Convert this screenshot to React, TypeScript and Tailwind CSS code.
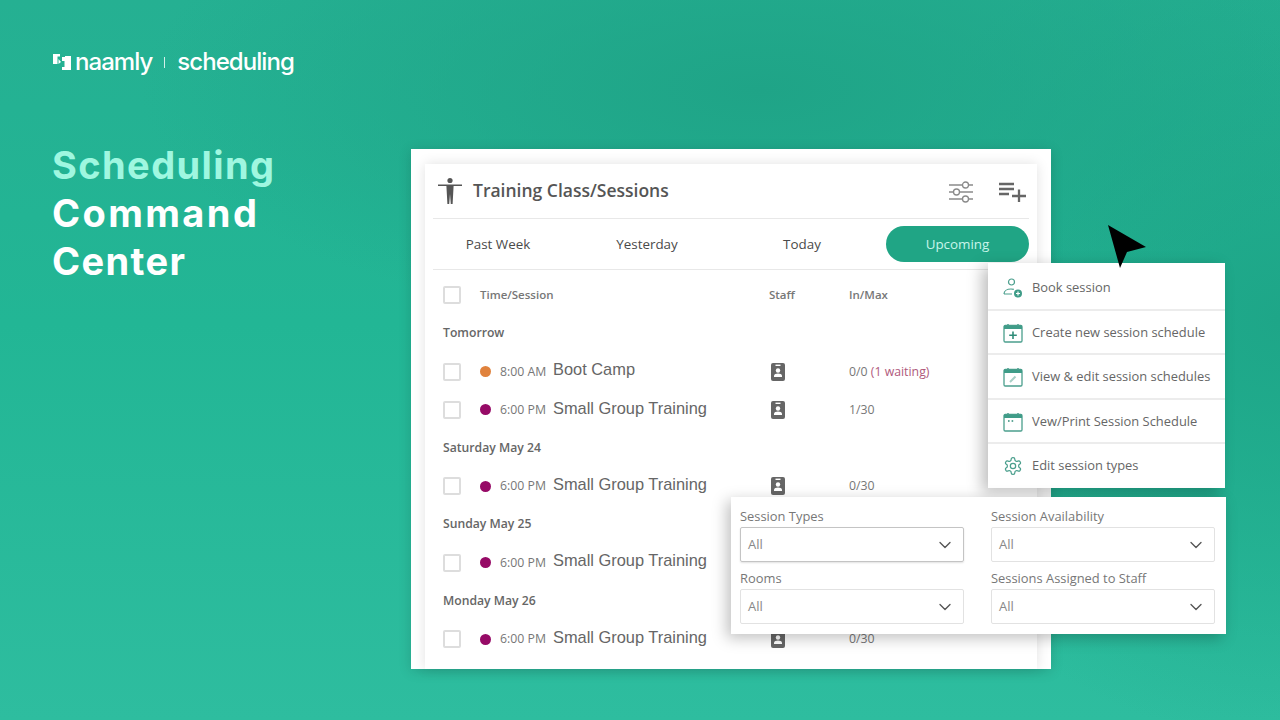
import React from 'react';
import { ChevronDown } from 'lucide-react';

interface Session {
  time: string;
  name: string;
  dot: string;
  count: string;
  waiting?: string;
}

interface SessionGroup {
  label: string;
  sessions: Session[];
}

const groups: SessionGroup[] = [
  {
    label: 'Tomorrow',
    sessions: [
      { time: '8:00 AM', name: 'Boot Camp', dot: 'bg-[#e0823d]', count: '0/0', waiting: '(1 waiting)' },
      { time: '6:00 PM', name: 'Small Group Training', dot: 'bg-[#960a66]', count: '1/30' },
    ],
  },
  {
    label: 'Saturday May 24',
    sessions: [{ time: '6:00 PM', name: 'Small Group Training', dot: 'bg-[#960a66]', count: '0/30' }],
  },
  {
    label: 'Sunday May 25',
    sessions: [{ time: '6:00 PM', name: 'Small Group Training', dot: 'bg-[#960a66]', count: '0/30' }],
  },
  {
    label: 'Monday May 26',
    sessions: [{ time: '6:00 PM', name: 'Small Group Training', dot: 'bg-[#960a66]', count: '0/30' }],
  },
];

const filters = ['Session Types', 'Session Availability', 'Rooms', 'Sessions Assigned to Staff'];

function Checkbox() {
  return <span className="block w-[18px] h-[18px] rounded-[2px] border-2 border-[#dddddd] bg-white" />;
}

function LogoMark() {
  return (
    <svg width="20" height="18" viewBox="0 0 20 18" fill="#ffffff">
      <path d="M1 1h7v2.500H5.500V11H1z" />
      <path d="M6.500 6l2.500 3-2.500 2z" />
      <path d="M10 4h3V3h6v14h-9v-3h2.500V8H10z" />
    </svg>
  );
}

function PersonIcon() {
  return (
    <svg width="24" height="28" viewBox="0 0 24 28" fill="#555555">
      <circle cx="12" cy="3.500" r="2.600" />
      <path d="M0 7.500h24v1.600h-8.400L14.600 27h-1.800L12 17l-.8 10H9.400L8.400 9.100H0z" />
    </svg>
  );
}

function SlidersIcon() {
  return (
    <svg width="24" height="22" viewBox="0 0 24 22" fill="none" stroke="#8a8a8a" strokeWidth="1.300">
      <path d="M0 4h13M20 4h4M0 11h4M11 11h13M0 18h13M20 18h4" />
      <circle cx="16.500" cy="4" r="3" fill="#ffffff" />
      <circle cx="7.500" cy="11" r="3" fill="#ffffff" />
      <circle cx="16.500" cy="18" r="3" fill="#ffffff" />
    </svg>
  );
}

function ListPlusIcon() {
  return (
    <svg width="28" height="20" viewBox="0 0 28 20" fill="none" stroke="#666666" strokeWidth="2.300">
      <path d="M0 2h15M0 7h15M0 12h10M13 14h14M20 7.500v12.500" />
    </svg>
  );
}

function StaffIcon() {
  return (
    <svg width="14" height="18" viewBox="0 0 14 18">
      <rect width="14" height="18" rx="2" fill="#666666" />
      <rect x="4.500" y="1.600" width="5" height="1.400" fill="#ffffff" />
      <circle cx="7" cy="7.500" r="2.200" fill="#ffffff" />
      <path d="M3 14v-1.200C3 11.300 5 10.600 7 10.600s4 .7 4 2.200V14z" fill="#ffffff" />
    </svg>
  );
}

function CalendarIcon({ kind }: { kind: 'plus' | 'edit' | 'dots' }) {
  return (
    <svg width="20" height="20" viewBox="0 0 20 20" fill="none" stroke="#4b9f8d" strokeWidth="1.300">
      <rect x="1" y="2.500" width="18" height="16.500" rx="1.200" />
      <path d="M1 2.600h18v3.400H1z" fill="#3f9c88" stroke="none" />
      <path d="M5 1v2M15 1v2" strokeWidth="1.500" />
      {kind === 'plus' && <path d="M10 8.500v7.500M6.200 12.200h7.600" strokeWidth="1.600" stroke="#2f8c78" />}
      {kind === 'edit' && <path d="M7 15l5.500-5.500" strokeWidth="2" stroke="#a8cfc6" />}
      {kind === 'dots' && <path d="M5 9h1.600M8.600 9h1.600" strokeWidth="1.600" stroke="#2f8c78" />}
    </svg>
  );
}

function BookIcon() {
  return (
    <svg width="20" height="20" viewBox="0 0 20 20" fill="none" stroke="#4b9f8d" strokeWidth="1.200">
      <circle cx="8.500" cy="4" r="3" />
      <path d="M1 16c0-3 3-5 7-5 1 0 2 .1 2.800 .4M1 16h8" />
      <circle cx="15" cy="15.500" r="4" fill="#3f9c88" stroke="none" />
      <path d="M15 13.500v4M13 15.500h4" stroke="#ffffff" strokeWidth="1.200" />
    </svg>
  );
}

function GearIcon() {
  return (
    <svg width="20" height="20" viewBox="0 0 24 24" fill="none" stroke="#4b9f8d" strokeWidth="1.500">
      <path d="M12.200 2h-.4a2 2 0 0 0-2 2v.2a2 2 0 0 1-1 1.700l-.4.3a2 2 0 0 1-2 0l-.2-.1a2 2 0 0 0-2.700.7l-.2.4a2 2 0 0 0 .7 2.700l.2.100a2 2 0 0 1 1 1.700v.6a2 2 0 0 1-1 1.700l-.2.100a2 2 0 0 0-.7 2.700l.2.4a2 2 0 0 0 2.700.7l.2-.1a2 2 0 0 1 2 0l.4.3a2 2 0 0 1 1 1.700v.2a2 2 0 0 0 2 2h.4a2 2 0 0 0 2-2v-.2a2 2 0 0 1 1-1.700l.4-.3a2 2 0 0 1 2 0l.2.100a2 2 0 0 0 2.700-.7l.2-.4a2 2 0 0 0-.7-2.700l-.2-.1a2 2 0 0 1-1-1.700v-.6a2 2 0 0 1 1-1.700l.2-.1a2 2 0 0 0 .7-2.700l-.2-.4a2 2 0 0 0-2.700-.7l-.2.100a2 2 0 0 1-2 0l-.4-.3a2 2 0 0 1-1-1.700V4a2 2 0 0 0-2-2z" />
      <circle cx="12" cy="12" r="3.200" />
    </svg>
  );
}

const menuItems = [
  { label: 'Book session', icon: <BookIcon />, rowClass: 'h-[48px] pt-[3px] border-b-2 border-[#ececec]' },
  { label: 'Create new session schedule', icon: <CalendarIcon kind="plus" />, rowClass: 'h-[44px] pt-[1px] border-b-2 border-[#ececec]' },
  { label: 'View & edit session schedules', icon: <CalendarIcon kind="edit" />, rowClass: 'h-[45px] pt-[1px] border-b-2 border-[#ececec]' },
  { label: 'Vew/Print Session Schedule', icon: <CalendarIcon kind="dots" />, rowClass: 'h-[44px] pt-[1px] border-b-2 border-[#ececec]' },
  { label: 'Edit session types', icon: <GearIcon />, rowClass: 'h-[44px]' },
];

export default function App() {
  return (
    <div className="relative w-[1280px] h-[720px] overflow-hidden flex font-['Open_Sans',sans-serif] bg-[radial-gradient(ellipse_620px_240px_at_760px_90px,#1fa487_0%,rgba(31,164,135,0)_100%),radial-gradient(ellipse_420px_420px_at_1280px_320px,#1ea688_0%,rgba(30,166,136,0)_100%),linear-gradient(180deg,#25b092_0%,#22b695_45%,#2ebd9f_100%)]">
      {/* left side */}
      <div className="w-[411px] shrink-0 pl-[52px] pt-[44px]">
        <div className="flex items-center h-[36px] text-white font-['Inter',sans-serif] font-medium text-[24px] tracking-[-0.95px]">
          <LogoMark />
          <span className="ml-[3px]">naamly</span>
          <span className="ml-[12px] w-px h-[11px] bg-white/80" />
          <span className="ml-[12px]">scheduling</span>
        </div>
        <h1 className="mt-[61px] font-['Inter',sans-serif] font-bold text-[38px] leading-[48px] tracking-[1.4px] text-white">
          <span className="block text-[#9ff7e0]">Scheduling</span>
          <span className="block tracking-[2.4px]">Command</span>
          <span className="block">Center</span>
        </h1>
      </div>

      {/* main panel */}
      <div className="mt-[149px] w-[640px] h-[520px] bg-white px-[14px] pt-[15px] shadow-[0_2px_12px_rgba(0,0,0,0.15)]">
        <div className="h-full bg-white px-[8px] text-[#555555] shadow-[0_0_12px_rgba(0,0,0,0.12)]">
          <div className="h-[55px] flex items-center justify-between border-b border-[#e8e8e8]">
            <div className="flex items-center">
              <span className="ml-[5px] mr-[11px] flex"><PersonIcon /></span>
              <span className="text-[17.5px] font-semibold text-[#555555] -mt-[1px]">Training Class/Sessions</span>
            </div>
            <div className="flex items-center gap-[26px] mr-[2px] mt-[2px]">
              <SlidersIcon />
              <ListPlusIcon />
            </div>
          </div>

          <div className="h-[51px] flex items-center border-b border-[#e8e8e8] text-[13.4px] text-[#4a4a4a]">
            <span className="w-[130px] text-center pt-[1px]">Past Week</span>
            <span className="w-[168px] text-center pt-[1px]">Yesterday</span>
            <span className="w-[142px] text-center pt-[1px]">Today</span>
            <span className="ml-[13px] w-[143px] h-[36px] pt-[1px] rounded-full bg-[#20a585] text-[#c8f5ea] flex items-center justify-center">Upcoming</span>
          </div>

          <div className="mt-[6px] h-[38px] grid grid-cols-[37px_289px_80px_1fr] items-center pl-[10px] text-[11.5px] font-semibold text-[#777777]">
            <Checkbox />
            <span>Time/Session</span>
            <span>Staff</span>
            <span>In/Max</span>
          </div>

          <div className="pt-[0.5px]">
            {groups.map((group) => (
              <div key={group.label}>
                <div className="h-[38.2px] flex items-center pl-[10px] text-[12.2px] font-semibold text-[#666666]">{group.label}</div>
                {group.sessions.map((s) => (
                  <div key={s.name + group.label} className="h-[38.2px] grid grid-cols-[37px_15px_57px_219px_78px_1fr] items-center pl-[10px]">
                    <Checkbox />
                    <span className={`block w-[11px] h-[11px] rounded-full ${s.dot}`} />
                    <span className="pl-[5px] text-[12.3px] text-[#777777] whitespace-nowrap">{s.time}</span>
                    <span className="pl-[1px] font-['Liberation_Sans',sans-serif] text-[16.4px] text-[#666666] whitespace-nowrap -mt-[4px]">{s.name}</span>
                    <span className="flex"><StaffIcon /></span>
                    <span className="text-[12.3px] text-[#777777] whitespace-nowrap">
                      {s.count}
                      {s.waiting && <span className="text-[#b0597c]"> {s.waiting}</span>}
                    </span>
                  </div>
                ))}
              </div>
            ))}
          </div>
        </div>
      </div>

      {/* dropdown menu over the panel */}
      <div className="absolute left-[988px] top-[263px] w-[237px] h-[225px] bg-white flex flex-col shadow-[-6px_4px_14px_rgba(0,0,0,0.25)]">
        {menuItems.map((item) => (
          <div key={item.label} className={`flex items-center pl-[15px] text-[12.9px] text-[#666666] whitespace-nowrap ${item.rowClass}`}>
            <span className="flex w-[29px]">{item.icon}</span>
            {item.label}
          </div>
        ))}
      </div>

      {/* filter popover */}
      <div className="absolute left-[731px] top-[497px] w-[495px] h-[137px] bg-white px-[9px] pt-[10px] grid grid-cols-[224px_224px] gap-x-[27px] content-start shadow-[-4px_4px_14px_rgba(0,0,0,0.25)]">
        {filters.map((label, i) => (
          <div key={label} className="h-[62px]">
            <div className="h-[20px] flex items-center text-[12.9px] text-[#777777] whitespace-nowrap">{label}</div>
            <div className={`h-[35px] rounded-[2px] border flex items-center justify-between pl-[7px] pr-[8px] text-[13px] text-[#888888] ${i === 0 ? 'border-[#c4c4c4] shadow-[0_1px_2px_rgba(0,0,0,0.12)]' : 'border-[#e2e2e2]'}`}>
              All
              <ChevronDown size={20} strokeWidth={1.6} color="#555555" />
            </div>
          </div>
        ))}
      </div>

      {/* mouse cursor */}
      <svg className="absolute left-[1108px] top-[225px]" width="39" height="44" viewBox="0 0 39 44" fill="#000000">
        <path d="M0 0L38 22L19 27L12 43z" />
      </svg>
    </div>
  );
}
